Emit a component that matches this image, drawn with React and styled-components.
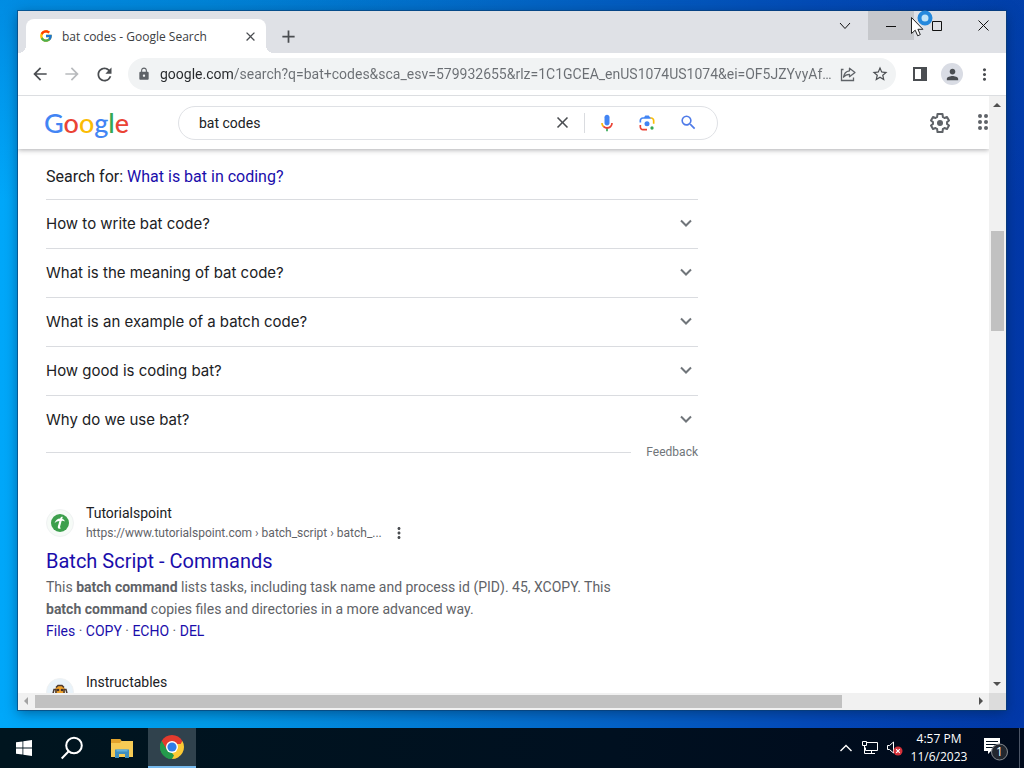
import React from "react";
import styled, { createGlobalStyle } from "styled-components";
import { FcGoogle } from "react-icons/fc";
import {
  MdAdd,
  MdArrowBack,
  MdArrowForward,
  MdClose,
  MdLock,
  MdMoreVert,
  MdPerson,
  MdRefresh,
  MdSearch,
  MdStarBorder,
} from "react-icons/md";

const uiFont = `"Open Sans", "Noto Sans", sans-serif`;
const webFont = `Roboto, "Liberation Sans", sans-serif`;

const GlobalStyle = createGlobalStyle`
  *{
    box-sizing: border-box;
  }
  body{
    margin: 0;
    overflow: hidden;
  }
  button{
    border: 0;
    padding: 0;
    background: none;
    color: inherit;
    font: inherit;
  }
  a{
    color: #1a0dab;
    text-decoration: none;
  }
  svg{
    display: block;
    flex: none;
  }
`;

const Desktop = styled.div`
  position: relative;
  display: flex;
  flex-direction: column;
  height: 100vh;
  font-family: ${uiFont};
  background: linear-gradient(90deg, #00a8fa 0%, #019be8 20%, #0470cf 50%, #0448b8 80%, #0238a8 100%);
`;

const Workspace = styled.main`
  flex: 1;
  display: flex;
  min-height: 0;
  padding: 11px 18px 18px;
  background: linear-gradient(180deg, #0050b050 0px, #0050b000 200px);
`;

const Browser = styled.section`
  flex: 1;
  display: flex;
  flex-direction: column;
  min-width: 0;
  background: #fff;
  box-shadow: 0 0 0 1px #0a3c70a0, 0 3px 12px #00204080;
`;

const TabStrip = styled.div`
  display: flex;
  height: 42px;
  padding-left: 8px;
  background: #dfe1e6;
`;

const Tab = styled.div`
  position: relative;
  display: flex;
  align-items: center;
  gap: 9px;
  width: 240px;
  height: 34px;
  margin-top: 8px;
  padding: 0 8px 0 13px;
  border-radius: 8px 8px 0 0;
  background: #fff;
  color: #3c4043;
  font-size: 12px;

  &::before,
  &::after{
    content: "";
    position: absolute;
    bottom: 0;
    width: 8px;
    height: 8px;
  }
  &::before{
    right: 100%;
    background: radial-gradient(circle at 0 0, #fff0 8px, #fff 8px);
  }
  &::after{
    left: 100%;
    background: radial-gradient(circle at 100% 0, #fff0 8px, #fff 8px);
  }
`;

const TabTitle = styled.span`
  flex: 1;
  white-space: nowrap;
`;

const IconButton = styled.button`
  flex: none;
  display: flex;
  align-items: center;
  justify-content: center;
  width: ${({ $width }) => $width || 32}px;
  height: ${({ $height }) => $height || 32}px;
  color: ${({ $color }) => $color || "#4a4d51"};
`;

const NewTab = styled(IconButton)`
  margin: 9px auto 0 6px;
`;

const CaptionButton = styled(IconButton)`
  width: 46px;
  height: 29px;
  color: #111;
  background: ${({ $hover }) => ($hover ? "#c6c8cc" : "none")};
`;

const Toolbar = styled.div`
  display: flex;
  align-items: center;
  height: 43px;
  padding: 0 6px;
  border-bottom: 1px solid #dcdee1;
`;

const Omnibox = styled.label`
  flex: 1;
  display: flex;
  align-items: center;
  min-width: 0;
  height: 32px;
  margin: 0 8px;
  padding-left: 9px;
  border-radius: 16px;
  background: #f1f3f4;
  color: #5f6368;
`;

const Address = styled.input`
  flex: 1;
  min-width: 0;
  height: 24px;
  margin-left: 9px;
  padding: 0;
  border: 0;
  outline: 0;
  color: #6a6e73;
  font-family: ${webFont};
  font-size: 14px;
  text-overflow: ellipsis;
  background: linear-gradient(90deg, #26282b 73px, #6a6e73 73px);
  background-clip: text;
  -webkit-text-fill-color: transparent;
`;

const Avatar = styled.span`
  display: flex;
  align-items: center;
  justify-content: center;
  width: 22px;
  height: 22px;
  border-radius: 50%;
  background: #d9dce4;
`;

const Viewport = styled.div`
  flex: 1;
  display: grid;
  grid-template-columns: minmax(0, 1fr) 17px;
  grid-template-rows: minmax(0, 1fr) 17px;
  min-height: 0;
`;

const Page = styled.div`
  overflow: hidden;
  color: #202124;
  font-family: ${webFont};
`;

const Header = styled.header`
  display: flex;
  align-items: center;
  height: 53px;
  padding-left: 26px;
  box-shadow: 0 1px 5px #20212460;
`;

const Logo = styled.a`
  width: 134px;
  font-family: Lato, sans-serif;
  font-size: 27px;
  font-weight: 500;
  line-height: 36px;
`;

const Letter = styled.span`
  color: ${({ $color }) => $color};
`;

const SearchBox = styled.form`
  display: flex;
  align-items: center;
  flex: 0 1 540px;
  height: 34px;
  padding: 0 8px 0 20px;
  border: 1px solid #dfe1e5;
  border-radius: 17px;
`;

const Query = styled.input`
  flex: 1;
  min-width: 0;
  padding: 0;
  border: 0;
  outline: 0;
  color: #202124;
  font-family: ${webFont};
  font-size: 14px;
`;

const Divider = styled.span`
  width: 1px;
  height: 20px;
  margin: 0 2px 0 6px;
  background: #dadce0;
`;

const HeaderTools = styled.div`
  display: flex;
  flex: none;
  align-items: center;
  gap: 15px;
  margin-left: auto;
  margin-right: -14px;
`;

const Column = styled.div`
  max-width: 680px;
  padding-left: 28px;
`;

const SearchFor = styled.p`
  margin: 0;
  padding: 16px 0 10px;
  font-size: 16px;
  line-height: 24px;
`;

const Question = styled.button`
  display: flex;
  align-items: center;
  justify-content: space-between;
  width: 100%;
  height: 49px;
  padding: 0 6px 2px 0;
  border-top: 1px solid #dadce0;
  font-family: Inter, sans-serif;
  font-size: 15px;
  text-align: left;
`;

const FeedbackRow = styled.div`
  display: flex;
  align-items: center;
  gap: 15px;
  margin-bottom: 43px;
  font-size: 12px;
  line-height: 16px;

  hr{
    flex: 1;
    margin: 0;
    border: 0;
    border-top: 1px solid #dadce0;
  }
  a{
    color: #70757a;
  }
`;

const Result = styled.article`
  margin-bottom: 30px;
  color: #5f6368;
  font-size: 14px;
  line-height: 22px;

  h3{
    margin: 5px 0 2px;
    font-size: 20px;
    font-weight: 400;
    line-height: 26px;
  }
  p{
    max-width: 600px;
    margin: 0;
  }
`;

const Source = styled.div`
  display: flex;
  align-items: center;
  gap: 12px;
  line-height: 20px;
`;

const Favicon = styled.span`
  display: flex;
  align-items: center;
  justify-content: center;
  width: 28px;
  height: 28px;
  border: 1px solid #f0f2f3;
  border-radius: 50%;
  background: ${({ $tint }) => $tint};
`;

const SiteName = styled.div`
  color: #202124;
`;

const SiteUrl = styled.div`
  display: flex;
  align-items: center;
  gap: 8px;
  color: #5f6368;
  font-size: 12px;
`;

const Scrollbar = styled.div`
  display: grid;
  background: #f1f1f1;
  ${({ $horizontal }) =>
    $horizontal
      ? "grid-template-columns: 17px 1fr 17px;"
      : "grid-template-rows: 17px 1fr 17px;"}
`;

const Track = styled.div`
  display: grid;
  padding: ${({ $horizontal }) => ($horizontal ? "2px 0" : "0 2px")};
  grid-template-columns: ${({ $horizontal }) => ($horizontal ? "807fr 130fr" : "1fr")};
  grid-template-rows: ${({ $horizontal }) => ($horizontal ? "1fr" : "118fr 100fr 345fr")};
`;

const Thumb = styled.div`
  grid-row: ${({ $row }) => $row};
  background: #c1c1c1;
`;

const Corner = styled.div`
  background: #dcdcdc;
`;

const Taskbar = styled.footer`
  display: flex;
  align-items: stretch;
  height: 40px;
  color: #fff;
  background: linear-gradient(90deg, #00151f, #001020 60%, #000a1c);
`;

const TaskButton = styled(IconButton)`
  width: 48px;
  height: 40px;
  color: #fff;
  background: ${({ $active }) => ($active ? "#30424d" : "none")};
  border-bottom: ${({ $active }) => ($active ? "2px solid #76b9ed" : "0")};
`;

const OpenApps = styled.div`
  display: flex;
  gap: 2px;
  margin-left: 2px;
`;

const Tray = styled.div`
  display: flex;
  align-items: center;
  margin-left: auto;
  padding-right: 4px;
`;

const Clock = styled.time`
  width: 66px;
  font-size: 12px;
  line-height: 18px;
  text-align: center;
`;

const Notifications = styled(TaskButton)`
  border-right: 1px solid #4c5566;
`;

const BusyCursor = styled.svg`
  position: absolute;
  top: 10px;
  right: 90px;
  pointer-events: none;
`;

const questions = [
  "How to write bat code?",
  "What is the meaning of bat code?",
  "What is an example of a batch code?",
  "How good is coding bat?",
  "Why do we use bat?",
];

const wordmark = [
  ["G", "#4285f4"],
  ["o", "#ea4335"],
  ["o", "#fbbc05"],
  ["g", "#4285f4"],
  ["l", "#34a853"],
  ["e", "#ea4335"],
];

const Arrow = ({ points, color = "#505050" }) => (
  <svg width="17" height="17" viewBox="0 0 17 17">
    <polygon points={points} fill={color} />
  </svg>
);

const ExpandIcon = () => (
  <svg width="12" height="8" viewBox="0 0 12 8" fill="none" stroke="#70757a" strokeWidth="2">
    <path d="m1 1.500 5 5 5-5" />
  </svg>
);

const MicIcon = () => (
  <svg width="20" height="20" viewBox="0 0 24 24">
    <path fill="#4285f4" d="M12 15c1.66 0 3-1.31 3-2.97V5.01C15 3.35 13.66 2 12 2S9 3.34 9 5.01v7.02C9 13.69 10.34 15 12 15z" />
    <path fill="#34a853" d="M11 18.08h2V22h-2z" />
    <path fill="#fbbc05" d="M7.05 16.87C5.78 15.54 5 14.04 5 12h2c0 1.45.56 2.42 1.47 3.38v.32l-1.15 1.18z" />
    <path fill="#ea4335" d="M12 16.93a4.97 5.25 0 0 1-3.54-1.55l-1.41 1.49C8.31 18.21 10.07 19 12 19c3.87 0 6.99-2.92 6.99-7H17c0 2.92-2.24 4.93-5 4.93z" />
  </svg>
);

const LensIcon = () => (
  <svg width="20" height="20" viewBox="0 0 192 192">
    <circle fill="#34a853" cx="144" cy="144" r="16" />
    <circle fill="#4285f4" cx="96" cy="104" r="24" />
    <path fill="#ea4335" d="M24 135.2C24 153.3 38.7 168 56.8 168H96v-16l-40.1-.1C47.1 151.9 40 143.7 40 134v-18H24z" />
    <path fill="#fbbc04" d="M168 72.8C168 54.7 153.3 40 135.2 40H116l20 16c8.8 0 16 8.3 16 18v30h16z" />
    <path fill="#4285f4" d="M112 24H80L68 40H56.8C38.7 40 24 54.7 24 72.8V92h16V74c0-9.7 7.2-18 16-18h80z" />
  </svg>
);

const GearIcon = () => (
  <svg width="24" height="24" viewBox="0 0 24 24" fill="none" stroke="#5f6368" strokeWidth="2">
    <path
      strokeLinejoin="round"
      d="M19 12.900c.1-.6.1-1.200 0-1.800l2-1.600-2-3.500-2.500 1c-.5-.4-1-.7-1.600-.9L14.500 3h-5l-.4 3.100c-.6.2-1.100.5-1.600.9L5 6 3 9.500l2 1.600c-.1.6-.1 1.200 0 1.800l-2 1.600L5 18l2.500-1c.5.4 1 .7 1.600.9l.4 3.100h5l.4-3.100c.6-.2 1.100-.5 1.600-.9l2.500 1 2-3.500z"
    />
    <circle cx="12" cy="12" r="3" fill="#5f6368" stroke="none" />
  </svg>
);

const AppsIcon = () => (
  <svg width="20" height="20" viewBox="0 0 20 20" fill="#5f6368">
    {[3, 9, 15].map((y) =>
      [3, 9, 15].map((x) => <circle key={`${x}-${y}`} cx={x} cy={y} r="2" />)
    )}
  </svg>
);

const ShareIcon = () => (
  <svg width="18" height="18" viewBox="0 0 18 18" fill="none" stroke="#5f6368" strokeWidth="1.3">
    <path d="M4.5 4.5h-2v11h12v-3" />
    <path d="M10.5 3.2 16 7.4l-5.500 4.300V9.300c-2.700 0-4.500.8-6 2.900.5-3.600 2.600-6 6-6.400z" strokeLinejoin="round" />
  </svg>
);

const SidePanelIcon = () => (
  <svg width="16" height="16" viewBox="0 0 16 16">
    <path d="M2 2h12v12H2z" fill="none" stroke="#4a4d51" strokeWidth="2" />
    <path d="M9 2h5v12H9z" fill="#4a4d51" />
  </svg>
);

const TutorialspointIcon = () => (
  <svg width="18" height="18" viewBox="0 0 18 18">
    <circle cx="9" cy="9" r="9" fill="#3c9f4c" />
    <path
      d="M3.500 9.300C4.500 6 6.500 4.500 9.200 4.500c.3-1.200 1.200-1.900 2.600-1.700l-.6 2.100c1.400.3 2.300 1.100 2.600 2.500-1.200-.6-2.200-.7-3.200-.5l-1.500 5.600c-.2.9.2 1.400 1 1.600-1 1.300-3.600.9-3.300-1.400l1.600-5.700C6.700 7.100 5 7.800 3.500 9.300z"
      fill="#fff"
    />
  </svg>
);

const RobotIcon = () => (
  <svg width="16" height="16" viewBox="0 0 16 16">
    <path d="M3 9V5l2-3h6l2 3v4z" fill="#f2a42b" />
    <path d="M4 3.500 6 1.500h4l2 2M1 9.500l1-4h2v4M15 9.500l-1-4h-2v4" fill="none" stroke="#4b3b35" strokeWidth="1.500" />
    <circle cx="6" cy="6" r="1.300" fill="#46332b" />
    <circle cx="10" cy="6" r="1.300" fill="#46332b" />
  </svg>
);

const WindowsIcon = () => (
  <svg width="16" height="16" viewBox="0 0 16 16" fill="#fff">
    <path d="M0 2.300 6.500 1.400v6.200H0zM7.300 1.300 16 0v7.600H7.300zM0 8.400h6.500v6.200L0 13.700zM7.300 8.400H16V16l-8.700-1.300z" />
  </svg>
);

const TaskSearchIcon = () => (
  <svg width="24" height="24" viewBox="0 0 24 24" fill="none" stroke="#fff" strokeWidth="2">
    <circle cx="14" cy="9.500" r="7.800" />
    <path d="M8.700 15.300 1.700 22.500" />
  </svg>
);

const FolderIcon = () => (
  <svg width="22" height="19" viewBox="0 0 22 19">
    <path d="M0 0h9l1.500 2H22v16H0z" fill="#f6cb55" />
    <path d="M0 0h9l1.500 2L9 4H0z" fill="#e2a32c" />
    <path d="M4 10.500h14V19h-4v-4H8v4H4z" fill="#3f8fc0" />
    <path d="M5.500 10.500h11v2h-11z" fill="#61b1dd" />
  </svg>
);

const ChromeIcon = () => (
  <svg width="24" height="24" viewBox="0 0 24 24">
    <path d="M12 12 1.610 6A12 12 0 0 1 22.390 6z" fill="#e33b2e" />
    <path d="M12 12 22.390 6A12 12 0 0 1 12 24z" fill="#fcc934" />
    <path d="M12 12v12A12 12 0 0 1 1.610 6z" fill="#249a4c" />
    <path d="M12 6h10.390L17.200 15zM6.800 15 1.610 6 12 6z" fill="#e33b2e" />
    <path d="M17.200 15 12 24l0-6 5.200-9h5.190z" fill="#fcc934" />
    <path d="M1.610 6 6.800 15l5.200 3 2 2.500L12 24A12 12 0 0 1 1.610 6z" fill="#249a4c" />
    <circle cx="12" cy="12" r="6" fill="#fff" />
    <circle cx="12" cy="12" r="4.600" fill="#2f7de9" />
  </svg>
);

const NetworkIcon = () => (
  <svg width="18" height="16" viewBox="0 0 18 16" fill="none" stroke="#fff">
    <path d="M5.500 2.500h11v8h-12v-3M1.500 1.500h4v4h-4zM3.500 5.500v8h4M10.500 10.500v3M7 13.500h7" />
  </svg>
);

const MutedIcon = () => (
  <svg width="18" height="16" viewBox="0 0 18 16" fill="none">
    <path d="M2.500 5.500h2l4-3.500v11l-4-3.500h-2z" stroke="#fff" />
    <circle cx="13" cy="11" r="4.500" fill="#d5313a" />
    <path d="m11.200 9.200 3.600 3.600m0-3.600-3.600 3.600" stroke="#fff" strokeWidth="1.200" />
  </svg>
);

const MessageIcon = () => (
  <svg width="26" height="26" viewBox="0 0 26 26">
    <path d="M1 3h16v13H8l-3 3v-3H1z" fill="#fff" />
    <path d="M3 6.500h12M3 9.500h12M3 12.500h8" stroke="#00101f" />
    <circle cx="16.500" cy="17" r="8" fill="#22272f" stroke="#858a90" />
    <text x="16.500" y="21" fill="#fff" fontSize="12" textAnchor="middle">1</text>
  </svg>
);

const TitleBar = () => (
  <TabStrip>
    <Tab>
      <FcGoogle size={14} />
      <TabTitle>bat codes - Google Search</TabTitle>
      <IconButton $width={16} $height={16} aria-label="Close tab">
        <MdClose size={15} />
      </IconButton>
    </Tab>
    <NewTab aria-label="New tab">
      <MdAdd size={21} />
    </NewTab>
    <CaptionButton aria-label="Search tabs">
      <svg width="12" height="8" viewBox="0 0 12 8" fill="none" stroke="currentColor">
        <path d="m1 1 5 5.500L11 1" />
      </svg>
    </CaptionButton>
    <CaptionButton $hover aria-label="Minimize">
      <svg width="10" height="10" stroke="currentColor">
        <path d="M0 5.500h10" />
      </svg>
    </CaptionButton>
    <CaptionButton aria-label="Maximize">
      <svg width="10" height="10" fill="none" stroke="currentColor">
        <path d="M.5.5h9v9h-9z" />
      </svg>
    </CaptionButton>
    <CaptionButton aria-label="Close">
      <svg width="11" height="11" stroke="currentColor">
        <path d="m.5.5 10 10m0-10-10 10" />
      </svg>
    </CaptionButton>
  </TabStrip>
);

const AddressBar = () => (
  <Toolbar>
    <IconButton aria-label="Back"><MdArrowBack size={20} /></IconButton>
    <IconButton $color="#b8babd" aria-label="Forward"><MdArrowForward size={20} /></IconButton>
    <IconButton aria-label="Reload"><MdRefresh size={21} /></IconButton>
    <Omnibox>
      <MdLock size={14} />
      <Address
        aria-label="Address"
        defaultValue="google.com/search?q=bat+codes&sca_esv=579932655&rlz=1C1GCEA_enUS1074US1074&ei=OF5JZYvyAf..."
      />
      <IconButton aria-label="Share"><ShareIcon /></IconButton>
      <IconButton aria-label="Bookmark"><MdStarBorder size={18} /></IconButton>
    </Omnibox>
    <IconButton aria-label="Side panel"><SidePanelIcon /></IconButton>
    <IconButton aria-label="Profile">
      <Avatar><MdPerson size={17} /></Avatar>
    </IconButton>
    <IconButton aria-label="Menu"><MdMoreVert size={19} /></IconButton>
  </Toolbar>
);

const PageHeader = () => (
  <Header>
    <Logo href="#home" aria-label="Google">
      {wordmark.map(([letter, color], i) => (
        <Letter key={i} $color={color}>{letter}</Letter>
      ))}
    </Logo>
    <SearchBox>
      <Query aria-label="Search" defaultValue="bat codes" />
      <IconButton type="button" aria-label="Clear"><MdClose size={19} /></IconButton>
      <Divider />
      <IconButton type="button" $width={40} aria-label="Search by voice"><MicIcon /></IconButton>
      <IconButton type="button" $width={40} aria-label="Search by image"><LensIcon /></IconButton>
      <IconButton $width={42} $color="#4f7be8" aria-label="Submit"><MdSearch size={19} /></IconButton>
    </SearchBox>
    <HeaderTools>
      <IconButton aria-label="Settings"><GearIcon /></IconButton>
      <IconButton aria-label="Apps"><AppsIcon /></IconButton>
    </HeaderTools>
  </Header>
);

const Results = () => (
  <Column>
    <SearchFor>
      Search for: <a href="#coding">What is bat in coding?</a>
    </SearchFor>
    {questions.map((question) => (
      <Question key={question} aria-expanded="false">
        {question}
        <ExpandIcon />
      </Question>
    ))}
    <FeedbackRow>
      <hr />
      <a href="#feedback">Feedback</a>
    </FeedbackRow>
    <Result>
      <Source>
        <Favicon $tint="#f6fbf7"><TutorialspointIcon /></Favicon>
        <div>
          <SiteName>Tutorialspoint</SiteName>
          <SiteUrl>
            https://www.tutorialspoint.com › batch_script › batch_...
            <IconButton $width={18} $height={18} aria-label="About this result">
              <MdMoreVert size={18} />
            </IconButton>
          </SiteUrl>
        </div>
      </Source>
      <h3><a href="#commands">Batch Script - Commands</a></h3>
      <p>
        This <b>batch command</b> lists tasks, including task name and process id (PID). 45, XCOPY. This{" "}
        <b>batch command</b> copies files and directories in a more advanced way.
      </p>
      <div>
        <a href="#files">Files</a> · <a href="#copy">COPY</a> · <a href="#echo">ECHO</a> · <a href="#del">DEL</a>
      </div>
    </Result>
    <Result>
      <Source>
        <Favicon $tint="#e9f3fa"><RobotIcon /></Favicon>
        <div>
          <SiteName>Instructables</SiteName>
          <SiteUrl>&nbsp;</SiteUrl>
        </div>
      </Source>
    </Result>
  </Column>
);

const App = () => (
  <Desktop>
    <GlobalStyle />
    <Workspace>
      <Browser>
        <TitleBar />
        <AddressBar />
        <Viewport>
          <Page>
            <PageHeader />
            <Results />
          </Page>
          <Scrollbar>
            <Arrow points="4,11 12,11 8,7" />
            <Track><Thumb $row={2} /></Track>
            <Arrow points="4,6 12,6 8,10" />
          </Scrollbar>
          <Scrollbar $horizontal>
            <Arrow points="10,4 10,12 6,8" color="#a3a3a3" />
            <Track $horizontal><Thumb $row={1} /></Track>
            <Arrow points="7,4 7,12 11,8" />
          </Scrollbar>
          <Corner />
        </Viewport>
      </Browser>
    </Workspace>
    <Taskbar>
      <TaskButton aria-label="Start"><WindowsIcon /></TaskButton>
      <TaskButton aria-label="Search"><TaskSearchIcon /></TaskButton>
      <OpenApps>
        <TaskButton aria-label="File Explorer"><FolderIcon /></TaskButton>
        <TaskButton $active aria-label="Google Chrome"><ChromeIcon /></TaskButton>
      </OpenApps>
      <Tray>
        <IconButton $width={24} $color="#fff" aria-label="Show hidden icons">
          <svg width="12" height="8" fill="none" stroke="currentColor" strokeWidth="1.400">
            <path d="m.5 7 5.500-5.500L11.500 7" />
          </svg>
        </IconButton>
        <IconButton $width={24} aria-label="Network"><NetworkIcon /></IconButton>
        <IconButton $width={24} aria-label="Volume"><MutedIcon /></IconButton>
        <Clock>
          4:57 PM
          <br />
          11/6/2023
        </Clock>
        <Notifications aria-label="Notifications"><MessageIcon /></Notifications>
      </Tray>
    </Taskbar>
    <BusyCursor width="24" height="28" viewBox="0 0 24 28">
      <circle cx="15" cy="8" r="5.500" fill="#bfe3f8" stroke="#2488dc" strokeWidth="4" />
      <path d="M1.500 7.500v16l3.700-3.300 2.500 5.600 2.600-1.200-2.400-5.300h5z" fill="#fff" stroke="#222" />
    </BusyCursor>
  </Desktop>
);

export default App;
